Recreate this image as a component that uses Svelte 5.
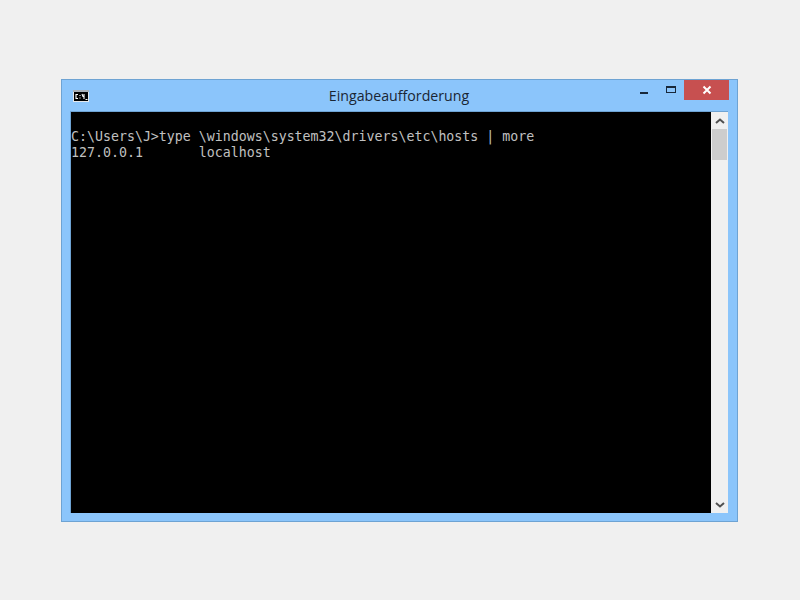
<script>
  const lines = [
    'C:\\Users\\J>type \\windows\\system32\\drivers\\etc\\hosts | more',
    '127.0.0.1       localhost'
  ]
</script>

<div class="page">
  <div class="window">
    <div class="titlebar">
      <svg class="app-icon" width="16" height="12" viewBox="0 0 16 12">
        <rect x="0" y="0" width="16" height="12" fill="#e4e8ec" />
        <rect x="0" y="0" width="16" height="2" fill="#a8b0b8" />
        <rect x="1" y="2" width="14" height="9" fill="#000" />
        <path d="M5 4.500H3V8.500H5M7 5V6M7 7.500V8.500M9 4L10 6.500H11.500M11 4V9M12.500 9.500H14.500" stroke="#fff" stroke-width="1.100" fill="none" />
      </svg>
      <span class="title">Eingabeaufforderung</span>
      <div class="controls">
        <div class="btn min"><span></span></div>
        <div class="btn max"><span></span></div>
        <div class="btn close">
          <svg width="10" height="10" viewBox="0 0 10 10">
            <path d="M1.500 1.500L8.500 8.500M8.500 1.500L1.500 8.500" stroke="#fff" stroke-width="2" fill="none" />
          </svg>
        </div>
      </div>
    </div>
    <div class="client">
      <div class="console">
        {#each lines as line}
          <div class="line">{line}</div>
        {/each}
      </div>
      <div class="scrollbar">
        <div class="arrow">
          <svg width="10" height="6" viewBox="0 0 10 6">
            <path d="M1 5L5 1.500L9 5" stroke="#505050" stroke-width="2" fill="none" />
          </svg>
        </div>
        <div class="thumb"></div>
        <div class="track"></div>
        <div class="arrow">
          <svg width="10" height="6" viewBox="0 0 10 6">
            <path d="M1 1L5 4.500L9 1" stroke="#505050" stroke-width="2" fill="none" />
          </svg>
        </div>
      </div>
    </div>
  </div>
</div>

<style>
  :global(body) {
    background: #f0f0f0;
  }

  .page {
    height: 600px;
    padding: 79px 0 0 61px;
    box-sizing: border-box;
  }

  .window {
    width: 677px;
    height: 443px;
    box-sizing: border-box;
    background: #8bc5fb;
    border: 1px solid #6ea3d3;
    padding: 0 9px 8px 8px;
    display: flex;
    flex-direction: column;
  }

  .titlebar {
    height: 31px;
    flex: none;
    display: flex;
    align-items: flex-start;
    position: relative;
  }

  .app-icon {
    margin: 10px 0 0 3px;
  }

  .title {
    position: absolute;
    left: 0;
    right: 0;
    top: 6px;
    text-align: center;
    font-family: "Open Sans", sans-serif;
    font-size: 14.200px;
    line-height: 20px;
    color: #1a2634;
  }

  .controls {
    margin-left: auto;
    margin-right: -1px;
    display: flex;
    position: relative;
  }

  .btn {
    display: flex;
    align-items: flex-start;
    justify-content: flex-start;
  }

  .min {
    width: 26px;
    height: 20px;
  }

  .min span {
    width: 8px;
    height: 2px;
    background: #18283a;
    margin-top: 12px;
  }

  .max {
    width: 10px;
    height: 20px;
    margin-right: 8px;
  }

  .max span {
    width: 8px;
    height: 4px;
    border: 1px solid #18283a;
    border-top-width: 2px;
    margin-top: 6px;
  }

  .close {
    width: 45px;
    height: 20px;
    background: #c75050;
    align-items: center;
    justify-content: center;
  }

  .client {
    flex: 1;
    display: flex;
    min-height: 0;
    border-top: 1px solid #6ea3d3;
    border-left: 1px solid #6ea3d3;
  }

  .console {
    flex: 1;
    background: #000;
    padding: 17px 0 0 0;
    color: #c0c0c0;
    font-family: "DejaVu Sans Mono", monospace;
    font-size: 13.280px;
    line-height: 16px;
    white-space: pre;
  }

  .scrollbar {
    width: 17px;
    flex: none;
    background: #f0f0f0;
    display: flex;
    flex-direction: column;
  }

  .arrow {
    height: 17px;
    flex: none;
    display: flex;
    align-items: center;
    justify-content: center;
  }

  .thumb {
    height: 31px;
    margin: 0 1px;
    background: #cdcdcd;
    flex: none;
  }

  .track {
    flex: 1;
  }
</style>
